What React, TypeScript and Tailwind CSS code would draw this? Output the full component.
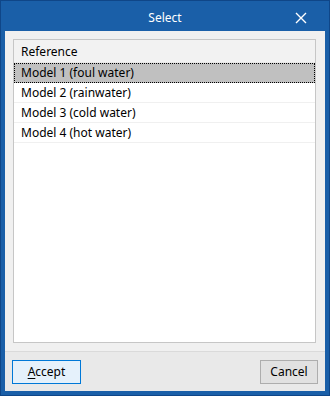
const rows = [
  "Model 1 (foul water)",
  "Model 2 (rainwater)",
  "Model 3 (cold water)",
  "Model 4 (hot water)",
];

export default function App() {
  return (
    <div
      className="w-[330px] h-[396px] bg-[#1a5fa8] border border-[#0f4688] flex flex-col text-[12px] text-black"
      style={{ fontFamily: '"Noto Sans", "Liberation Sans", sans-serif' }}
    >
      {/* Title bar */}
      <div className="h-[30px] shrink-0 relative flex items-center justify-center text-white text-[12px] pt-[3px]">
        <span>Select</span>
        <button className="absolute right-[20px] top-[9px] w-[16px] h-[16px] flex items-center justify-center">
          <svg width="12" height="12" viewBox="0 0 12 12" fill="none" stroke="white" strokeWidth="1.4">
            <path d="M1 1 L11 11 M11 1 L1 11" />
          </svg>
        </button>
      </div>

      {/* Client area */}
      <div className="flex-1 mx-[4px] mb-[4px] bg-[#f0f0f0] flex flex-col">
        <div className="flex-1 pt-[8px] px-[8px] pb-[8px]">
          <div className="h-full w-[303px] border border-[#c6c6c6] bg-white flex flex-col">
            <div className="h-[23px] bg-[#f2f2f2] border-b border-[#e8e8e8] flex items-center pl-[7px] pt-[1px]">
              Reference
            </div>
            {rows.map((r, i) => (
              <div
                key={r}
                className={
                  i === 0
                    ? "h-[20px] bg-[#c0c0c0] border border-dotted border-black flex items-center pl-[6px]"
                    : "h-[20px] border-b border-[#f0f0f0] flex items-center pl-[7px]"
                }
              >
                {r}
              </div>
            ))}
          </div>
        </div>

        {/* Footer */}
        <div className="h-[40px] shrink-0 border-t border-[#dadada] bg-[#e9e9e9] flex items-center justify-between px-[7px]">
          <button className="w-[69px] h-[24px] bg-[#e5f1fb] border border-[#0078d7]">
            <span className="underline underline-offset-2">A</span>ccept
          </button>
          <button className="w-[58px] h-[24px] bg-[#e1e1e1] border border-[#adadad]">
            Cancel
          </button>
        </div>
      </div>
    </div>
  );
}
